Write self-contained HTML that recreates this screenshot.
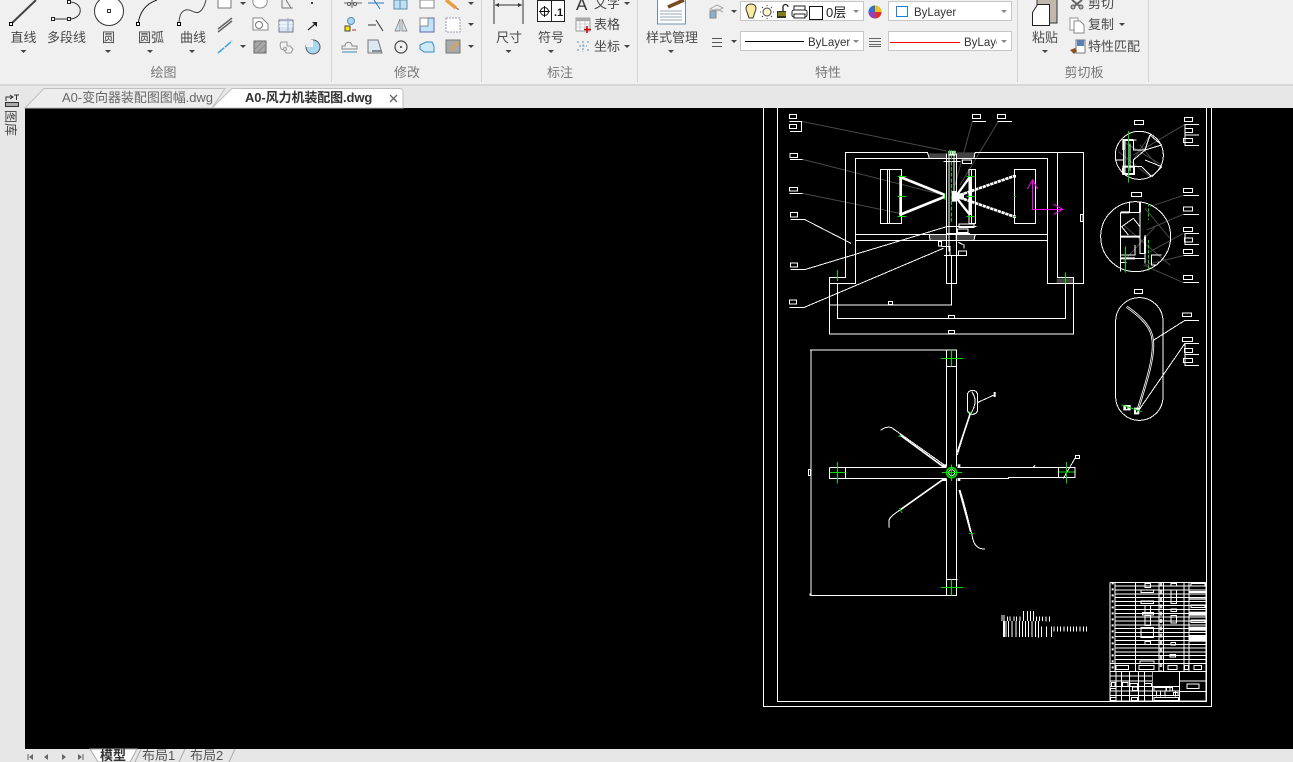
<!DOCTYPE html>
<html><head><meta charset="utf-8"><style>
html,body{margin:0;padding:0;background:#000;width:1293px;height:762px;overflow:hidden}
svg{display:block;position:absolute;left:0;top:0}
text{font-family:"Liberation Sans","Noto Sans CJK SC",sans-serif;font-size:13px;fill:#4a4a4a}
.m{text-anchor:middle}.g{fill:#777}
.d{fill:none;stroke:#fff;stroke-width:3;shape-rendering:crispEdges}
.k{fill:none;stroke:#484848;stroke-width:3}
.n{fill:none;stroke:#00e000;stroke-width:3;shape-rendering:crispEdges}
.i{fill:none;stroke:#555;stroke-width:1}
</style></head><body>
<svg width="1293" height="762" viewBox="0 0 1293 762">
<rect width="1293" height="762" fill="#000"/>
<!-- ribbon -->
<rect width="1293" height="85" fill="#f0f0f0"/>
<rect y="85" width="1293" height="23" fill="#e7e7e7"/>
<rect y="84" width="1293" height="2" fill="#d8d8d8"/>
<rect y="86" width="25" height="676" fill="#e7e7e7"/>
<rect y="749" width="1293" height="13" fill="#e7e7e7"/>
<path d="M331.500 0V82M481.500 0V82M637.500 0V82M1017.500 0V82M1148.500 0V82" stroke="#d4d4d4"/>
<!-- draw icons -->
<path d="M11 24L36 0" stroke="#444" stroke-width="2"/><rect x="9.500" y="22.500" width="3" height="3" fill="#fff" stroke="#000"/>
<path d="M53 19H69M69 2C84 2 84 19 69 19" fill="none" stroke="#333"/>
<rect x="51.500" y="17.500" width="3" height="3" fill="#fff" stroke="#222"/><rect x="67.500" y="17.500" width="3" height="3" fill="#fff" stroke="#222"/><rect x="67.500" y="0.500" width="3" height="3" fill="#fff" stroke="#222"/>
<circle cx="109" cy="11" r="14.500" fill="#fff" stroke="#333"/><rect x="107.500" y="9.500" width="3" height="3" fill="#fff" stroke="#333"/>
<path d="M138 24C140 10 148 3 157 0" fill="none" stroke="#222"/><rect x="136.500" y="22.500" width="3" height="3" fill="#fff" stroke="#000"/>
<path d="M179 24C179 10 186 8 192 11C200 16 204 8 206 0" fill="none" stroke="#444"/><rect x="177.500" y="22.500" width="3" height="3" fill="#fff" stroke="#000"/>
<path d="M218 0V8H231V0" fill="#fff" stroke="#777"/><path d="M253 0C252 5 256 8 260 8C264 8 268 5 267 0" fill="#fff" stroke="#888"/><path d="M282 8V0M282 8H293M286 0L291 8" fill="none" stroke="#777"/><rect x="311" y="2" width="2" height="2" fill="#444"/>
<path d="M218 29L232 18M218 32L232 21" stroke="#666" stroke-width="1.500"/>
<path d="M218 53L232 41" stroke="#3aa0dc" stroke-width="1.500" stroke-dasharray="8 1"/>
<path d="M253 18H262L268 24V30H253Z" fill="#fff" stroke="#888"/><circle cx="259" cy="25" r="3.500" fill="none" stroke="#777"/>
<path d="M279 20H293V32H279Z" fill="#d6e3f0" stroke="#778"/><path d="M279 23H293M279 26H293" stroke="#fff"/><path d="M288 18V33" stroke="#8fa8c0"/>
<path d="M308 30L315 24" stroke="#333" stroke-width="1.300"/><path d="M312 22H317V27Z" fill="#222"/>
<rect x="254" y="41" width="12" height="12" fill="#a8a8a8" stroke="#666"/><path d="M254 44L257 41M254 50L263 41M257 53L266 44M263 53L266 50" stroke="#8a8a8a"/>
<path d="M281 42h6v4h3l3 3-2 4h-5l-2-3-3-1-1-4z" fill="#f0f0f0" stroke="#999"/><circle cx="285" cy="49" r="1.500" fill="none" stroke="#999"/>
<circle cx="313" cy="47" r="7" fill="#a8d8f0" stroke="#555"/><path d="M306 47V40H313V47Z" fill="#f0f0f0"/>
<!-- modify icons -->
<path d="M344 3H352M352 3H362M352 0V8" stroke="#666"/><circle cx="349" cy="4" r="1.500" fill="#fff" stroke="#555"/><circle cx="355" cy="4" r="1.500" fill="#fff" stroke="#555"/>
<path d="M368 3H384M374 0L380 9" stroke="#2b75b5"/>
<rect x="394" y="0" width="13" height="9" fill="#bfe0f5" stroke="#5b8fb0"/><path d="M400 0V9" stroke="#5b8fb0"/>
<rect x="420" y="0" width="14" height="8" fill="#fff" stroke="#888"/>
<path d="M446 0L456 8" stroke="#e8a040" stroke-width="3.500"/><path d="M455 7l4 2-1 1z" fill="#a33"/>
<rect x="345" y="26" width="5" height="5" fill="#ffe000" stroke="#444"/><circle cx="351" cy="21" r="3.500" fill="#a8d8f0" stroke="#5b8fb0"/><path d="M352 30h4" stroke="#a33"/>
<path d="M368 25H376M376 20L383 31" stroke="#333"/>
<path d="M400 19L395 31H400ZM402 19L407 31H402Z" fill="#cfe4f0" stroke="#777" stroke-width=".7"/>
<rect x="420" y="18" width="14" height="14" fill="#bfe3f8" stroke="#66a"/><rect x="420" y="18" width="8" height="8" fill="#fff" stroke="#888"/>
<rect x="446" y="18" width="14" height="14" fill="#fff" stroke="#99b" stroke-dasharray="2 1"/>
<path d="M342 49H357V46H352C352 41 345 41 345 46H342Z" fill="none" stroke="#888"/><path d="M342 52H357" stroke="#3a8ac0"/>
<path d="M368 40H378L382 53H368Z" fill="#dbe8f2" stroke="#777"/><path d="M372 51H381" stroke="#333"/>
<circle cx="401" cy="47" r="6" fill="none" stroke="#444" stroke-width="1.200"/><circle cx="401" cy="47" r="1" fill="#333"/>
<path d="M420 45l6-3h6l2 4v6h-10l-4-3z" fill="#cde8f8" stroke="#3a8ac0"/>
<rect x="446" y="40" width="14" height="13" fill="#aaa" stroke="#777"/><path d="M451 50L458 42" stroke="#e8a040" stroke-width="2"/>
<!-- annotation icons -->
<path d="M494 0V24M523 0V24M495 5H522" stroke="#333"/><path d="M495 5l4-2v4zM522 5l-4-2v4z" fill="#333"/>
<rect x="537.500" y="0.500" width="27" height="21" fill="#fff" stroke="#222"/><path d="M551.500 0V22" stroke="#222"/><circle cx="544.500" cy="11.500" r="4" fill="none" stroke="#111"/><path d="M539 11.500H550M544.500 6V17" stroke="#111"/>
<text x="554" y="16" style="font-size:11px;font-weight:bold;fill:#111">.1</text>
<text x="576" y="10" style="font-size:17px;fill:#333">A</text>
<rect x="576" y="18" width="14" height="13" fill="#fff" stroke="#999"/><path d="M576 18h14v3h-14zM576 24h14M576 27h14M580 18v13M585 18v13" stroke="#aaa" fill="#aaa" stroke-width=".6"/><path d="M587 26v7M584 29.500h7" stroke="#c00" stroke-width="1.500"/>
<path d="M577 42h3M577 50h3M587 42h3M587 50h3M583 41v11M579 46h8" stroke="#5a8fb5" stroke-dasharray="2 1.500"/>
<!-- properties icons -->
<rect x="657.500" y="-2" width="28" height="26" fill="#fff" stroke="#6f8fa8"/><path d="M660 11h22M660 14h22M660 17h22M660 20h22" stroke="#9ab"/><path d="M668 7L684 0" stroke="#7a4a20" stroke-width="3.500"/>
<path d="M710 9l7-4 6 3-6 3zM710 12l7-3 6 3" fill="none" stroke="#aaa"/><rect x="710" y="11" width="6" height="7" fill="#8ab0cc" stroke="#888"/>
<rect x="740.500" y="1.500" width="123" height="19" fill="#fff" stroke="#c6c6c6"/>
<path d="M751 4C746 4 745 8 747 12L749 18H753L755 12C757 8 756 4 751 4Z" fill="#f8eaa0" stroke="#333"/>
<circle cx="767" cy="12" r="4" fill="#fff6d0" stroke="#444"/><path d="M767 6v-1M767 19v-1M761 12h-1M774 12h-1M762 7l1 1M771 16l1 1M772 7l-1 1M762 17l1-1" stroke="#444"/>
<rect x="777" y="11" width="9" height="7" fill="#332" /><path d="M778 13h8M778 15h8" stroke="#d8c020"/><path d="M783 11V7a2.500 2.500 0 0 1 5 0" fill="none" stroke="#222" stroke-width="1.300"/>
<rect x="792" y="10" width="15" height="7" rx="2" fill="#fff" stroke="#222"/><rect x="794" y="6" width="11" height="4" fill="#fff" stroke="#222"/><rect x="794" y="14" width="11" height="4" fill="#fff" stroke="#222"/>
<rect x="809.500" y="6.500" width="13" height="13" fill="#fff" stroke="#111"/>
<text x="826" y="17" style="font-size:13px;fill:#222">0层</text>
<circle cx="875" cy="12" r="6.500" fill="#5ac040"/><path d="M875 12V5.500A6.500 6.500 0 0 1 881.500 12Z" fill="#f0c020"/><path d="M875 12H881.500A6.500 6.500 0 0 1 875 18.500Z" fill="#e03030"/><path d="M875 12V18.500A6.500 6.500 0 0 1 868.500 12Z" fill="#9040c0"/><path d="M875 12H868.500A6.500 6.500 0 0 1 875 5.500Z" fill="#3070d0"/>
<rect x="888.500" y="1.500" width="123" height="19" fill="#fff" stroke="#c6c6c6"/>
<rect x="896.500" y="6.500" width="11" height="10" fill="#fff" stroke="#1a80d0"/>
<text x="914" y="16" style="font-size:11.500px;fill:#333">ByLayer</text>
<path d="M712 38.500H722M712 42.500H722M712 46.500H722" stroke="#555"/>
<rect x="740.500" y="31.500" width="123" height="19" fill="#fff" stroke="#c6c6c6"/>
<path d="M745 41.500H804" stroke="#000"/>
<text x="808" y="46" style="font-size:11.500px;fill:#333">ByLayer</text>
<path d="M869 38.500H881M869 41.500H881M869 44.500H881M869 46.500H881" stroke="#666"/>
<rect x="888.500" y="31.500" width="123" height="19" fill="#fff" stroke="#c6c6c6"/>
<path d="M890 42.500H960" stroke="#f00"/>
<svg x="964" y="34" width="33" height="16"><text x="0" y="12" style="font-size:11.500px;fill:#333">ByLayer</text></svg>
<!-- clipboard icons -->
<rect x="1037" y="-6" width="20" height="29" fill="#c0b8ac" stroke="#333"/>
<path d="M1032.500 12.500L1037.500 4.500H1049.500V25.500H1032.500Z" fill="#fff" stroke="#222"/>
<path d="M1072 0L1082 8M1082 0L1072 8" stroke="#666" stroke-width="2"/><circle cx="1073" cy="7" r="2" fill="#bbb" stroke="#555"/><circle cx="1081" cy="7" r="2" fill="#bbb" stroke="#555"/>
<path d="M1070 18h8v12h-8z" fill="#fff" stroke="#999"/><path d="M1074 21h6l4 4v8h-10z" fill="#fff" stroke="#888"/>
<rect x="1076" y="40" width="9" height="13" fill="#fff" stroke="#777"/><rect x="1077" y="40" width="7" height="6" fill="#5a80b0"/><path d="M1070 50l5-2 2 3-3 3z" fill="#8a5020"/>
<!-- caret arrows -->
<path fill="#444" d="M20.500 50h6l-3 3zM105 50h6l-3 3zM147 50h6l-3 3zM189 50h6l-3 3zM240 2h6l-3 3zM240 45h6l-3 3zM468 2h6l-3 3zM468 23h6l-3 3zM468 45h6l-3 3zM505.500 50h6l-3 3zM548 50h6l-3 3zM624 2h6l-3 3zM624 45h6l-3 3zM668 50h6l-3 3zM731 10h6l-3 3zM731 40h6l-3 3zM1042 50h6l-3 3zM1119 23h6l-3 3z"/>
<path fill="#888" d="M853 10h6l-3 3zM1001 10h6l-3 3zM853 40h6l-3 3zM1001 40h6l-3 3z"/>
<!-- ribbon text -->
<g class="rt">
<text class="m" x="23.500" y="42">直线</text><text class="m" x="66.500" y="42">多段线</text><text class="m" x="108.500" y="42">圆</text><text class="m" x="151" y="42">圆弧</text><text class="m" x="193" y="42">曲线</text>
<text class="m g" x="163.500" y="77">绘图</text><text class="m g" x="407" y="77">修改</text><text class="m g" x="560" y="77">标注</text><text class="m g" x="828" y="77">特性</text><text class="m g" x="1084" y="77">剪切板</text>
<text class="m" x="509" y="42">尺寸</text><text class="m" x="551" y="42">符号</text>
<text x="594" y="8">文字</text><text x="594" y="29">表格</text><text x="594" y="51">坐标</text>
<text class="m" x="672" y="42">样式管理</text>
<text class="m" x="1045" y="42">粘贴</text><text x="1088" y="8">剪切</text><text x="1088" y="29">复制</text><text x="1088" y="51">特性匹配</text>
</g>
<!-- tabs -->
<path d="M25 108L44 88.500H225L212 108Z" fill="#ededed" stroke="#c0c0c0"/>
<path d="M212 108L232 88.500H400Q403 88.500 403 92V108Z" fill="#fff" stroke="#c0c0c0"/>
<text x="62" y="102" style="font-size:13px;fill:#666;letter-spacing:-.05px">A0-变向器装配图图幅.dwg</text>
<text x="245" y="102" style="font-size:13px;font-weight:bold;fill:#333;letter-spacing:-.1px">A0-风力机装配图.dwg</text>
<path d="M390 95L397 102M397 95L390 102" stroke="#666" stroke-width="1.300"/>
<!-- left rail -->
<path d="M6 101V97H12M10 95l3 2-3 2M14 95h5M16.500 95v5" fill="none" stroke="#333"/><rect x="5.500" y="102.500" width="13" height="4" fill="#aaa" stroke="#333"/>
<text transform="translate(6,110) rotate(90)" style="font-size:13px;fill:#444">图库</text>
<!-- bottom bar -->
<path fill="#666" d="M33 754v6l-4-3zM48 754v6l-4-3zM62 754v6l4-3zM78 754v6l4-3z"/><path d="M28 754v6M83 754v6" stroke="#666"/>
<path d="M90 749L98 762H130L137 749Z" fill="#fff" stroke="#aaa"/><path d="M135 762L141 749M179 762L185 749M229 762L235 749" stroke="#aaa"/>
<text x="100" y="760" style="font-size:13px;font-weight:bold;fill:#333">模型</text>
<text x="142" y="760" style="font-size:13px;fill:#555">布局1</text><text x="190" y="760" style="font-size:13px;fill:#555">布局2</text>

<!-- drawing frame -->
<path d="M763.500 108V706.500H1211.500V108M777.500 108V701.500H1206.500V108" fill="none" stroke="#fff" shape-rendering="crispEdges"/>

<!-- main section -->
<g transform="translate(770,105) scale(.33333)">
<path class="k" d="M95 49L530 138M607 49L555 240M685 49L570 240M97 163L520 270M97 265L390 325"/>
<path fill="#444" d="M472 145H530V160H478ZM560 142H615L612 160H560ZM478 390H530V406H480ZM555 390H618L612 406H555Z"/>
<path fill="#444" d="M860 520H910V535H860Z"/>
<path class="d" d="M58 28h22v13h-22zM58 58h22v13h-22zM58 49H95V80H60M607 28h25v13h-25zM607 49H648M682 28h25v13h-25zM682 49H726M60 145h23v12h-23zM60 163H97M58 247h25v11h-25zM58 265H97M61 322h22v14h-22zM61 343H103L243 415M61 474h22v12h-22zM61 493H107L530 365M58 585h22v12h-22zM58 607H103L520 430"/>
<path class="d" d="M178 535V517H226V142H472M615 142H940V535H832V160H257V535H178V687H910V517H862V142M202 535V640H886V535M180 600H545V535M355 589h13v9h-13zM535 632h19v8h-19zM535 676h19v9h-19zM931 328h8v22h-8zM257 388H832M257 406H832M472 142L478 160H257M615 142L612 160M331 193H395V356H331ZM352 193V356M358 193V356M733 193H797V356H733ZM597 193H617V356H597ZM605 193V356M529 145V535H560V145M520 170H572M537 145V440M552 145V260M578 165h27v11h-27zM567 357h45v10h-45zM562 372h32v11h-32zM565 438h24v13h-24zM505 410h10v13h-10zM522 451H590M515 425H540V450M530 365H620M530 385H600M545 450V600M478 390L480 406M615 390L612 406M565 412L582 420V430"/>
<path d="M388 215L525 270M388 330L525 275M392 215V330" stroke="#fff" stroke-width="8" fill="none"/>
<path d="M570 270L733 213M570 278L733 335" stroke="#fff" stroke-width="8" stroke-dasharray="10 2" fill="none"/>
<path d="M600 215L562 268M600 330L562 282M601 215V330" stroke="#fff" stroke-width="7" fill="none"/>
<path fill="#fff" d="M545 258h14v32h-14zM558 265h24v18h-24zM730 210h8v8h-8zM730 331h8v8h-8zM535 138h22v14h-22z"/>
<path class="n" d="M382 215H408M382 274H408M382 334H408M590 215H614M590 274H614M590 334H614M202 495V528M886 502V535M525 265V285M730 274H738M730 334H738"/>
<path class="n" d="M545 135V350M538 135V150M552 135V150" stroke-dasharray="12 5"/>
<path d="M788 225V313H878M772 252L788 225L803 252M852 298L878 313L852 328" fill="none" stroke="#f0f" stroke-width="3" shape-rendering="crispEdges"/>
</g>

<!-- details -->
<g transform="translate(1090,105) scale(.33333)">
<path class="k" d="M285 58L130 150M280 271L180 305M280 328L170 375M280 385L180 440M280 452L165 480M280 533L160 480M100 110L215 180M85 140L180 215M130 165L180 90M150 120L210 190M165 310L240 400M100 360L240 480M100 470L200 360"/>
<circle class="d" cx="148" cy="151" r="72"/><circle class="d" cx="137" cy="395" r="105"/>
<rect class="d" x="77" y="578" width="142" height="368" rx="71"/>
<path class="d" d="M133 46h27v12h-27zM283 37h25v12h-25zM285 70h22v13h-22zM281 101h26v12h-26zM327 58H285V121H327M285 90H327M124 262h31v12h-31zM280 250h27v13h-27zM280 271H327M280 306h27v12h-27zM280 328H327M280 367h27v12h-27zM283 399h25v12h-25zM327 385H285V418H327M280 433h27v12h-27zM280 452H327M280 511h27v12h-27zM280 533H327M133 553h25v12h-25zM277 624h27v11h-27zM327 646H285L190 706M277 697h31v13h-31zM283 730h25v12h-25zM280 760h27v13h-27zM327 715H285V781H327M285 748H327M285 715L140 925"/>
<path class="d" d="M75 165H100V105H130V135H165L180 90M165 135L215 120M100 165V190H97V207H130V185H155L185 215M165 165L215 185M165 135L130 165M105 105V207M130 185V165M97 105H140M120 115V200M180 90L215 120M185 215L215 185"/>
<path d="M100 135V105H130M100 185H132V207H100Z" fill="none" stroke="#fff" stroke-width="6"/>
<path class="d" d="M92 322H150V290M118 290V322M92 322V500M92 395H150V365L130 340L95 365L115 390M92 450H135V420M92 460H165V445H150V320M165 390V475M185 450V480H200M92 472H110M183 450H215M150 395V320"/>
<path d="M150 290V322M92 322H118M92 395H150M165 395V445M92 460H135" fill="none" stroke="#fff" stroke-width="6"/>
<path d="M110 605C160 640 185 670 188 705C195 750 170 830 143 915" fill="none" stroke="#fff" stroke-width="7"/><path d="M110 605C160 640 185 670 188 705C195 750 170 830 143 915" fill="none" stroke="#000" stroke-width="2"/>
<path fill="#fff" d="M100 900h22v16h-22zM132 908h16v20h-16z"/><path fill="#000" d="M108 904h4v8h-4zM138 914h4v8h-4z"/>
<path class="n" d="M115 78V232M106 424V503M95 900L155 920"/>
<path class="n" d="M176 295V345M176 405V497" stroke-dasharray="10 5"/>
</g>

<!-- plan view -->
<g transform="translate(800,345) scale(.33333)">
<path class="d" d="M30 15H470V365M33 15V752H470V400M30 745V752M440 15V365M440 400V752M88 367H440M472 367H825V397H625V400H472M88 367V400H440M136 367V400M775 367V397M440 65H470M440 703H472M25 373h7v18h-7z"/>
<path class="d" d="M242 256C255 245 265 245 275 248L440 365M430 365L300 270M268 548C262 520 270 515 300 495L430 403M480 435C495 480 505 530 515 565C520 600 530 612 555 612M472 330L510 205M513 205C528 180 530 160 515 140M534 172L582 150M825 340L790 400M700 366L705 361"/>
<path d="M472 322L511 205M430 403L300 495M478 435L512 560M300 270L430 365" stroke="#fff" stroke-width="5" fill="none"/>
<rect class="d" x="502" y="136" width="31" height="72" rx="15"/>
<rect x="581" y="141" width="6" height="15" fill="#fff"/><rect class="d" x="826" y="331" width="12" height="10"/>
<rect x="427" y="358" width="12" height="8" fill="#fff"/><rect x="427" y="401" width="12" height="7" fill="#fff"/><rect x="473" y="358" width="8" height="8" fill="#fff"/><rect x="473" y="401" width="8" height="7" fill="#fff"/>
<circle cx="455" cy="383" r="15" fill="none" stroke="#00e000" stroke-width="5"/><circle cx="455" cy="383" r="9" fill="none" stroke="#fff" stroke-width="3"/>
<path class="n" d="M423 40H489M455 15V65M423 727H489M455 703V752M426 383H486M455 358V408M88 383H136M112 351V416M775 381H824M800 351V416M296 275L304 270M298 490L306 503M507 565H520M505 200L516 206"/>
</g>

<!-- title block -->
<g transform="translate(990,575) scale(.33333)">
<path class="d" d="M36 120V138M42 120V138M52 124V138M60 124V138M72 124V138M80 124V138M90 124V138M100 108V138M112 108V138M122 108V138M130 108V138M140 124V138M148 124V138M158 124V138M168 124V140M178 124V140M40 138V186M44 138V186M48 138V186M56 138V186M66 138V186M78 138V186M88 138V186M98 138V186M106 138V186M116 138V186M126 138V186M136 138V186M146 138V188M155 155V186M170 155V186M185 155V186M192 155V170M202 155V170M212 155V170M222 155V170M232 155V170M241 155V170M250 155V170M260 155V170M270 155V170M280 155V170M290 155V170"/>
<path class="d" d="M360 22H648V378M360 22V378M375 22V290M437 22V290M507 22V290M520 22V290M582 22V290M597 22V290M375 33H648M375 45H648M375 57H648M375 68H648M375 80H648M375 92H648M375 103H648M375 115H648M375 126H648M375 138H648M375 150H648M375 161H648M375 173H648M375 184H648M375 196H648M375 208H648M375 219H648M375 231H648M375 242H648M375 254H648M360 266H648M360 290H648"/>
<path class="d" d="M360 303H488M360 318H488M360 334H568M360 348H568M360 362H568M378 290V378M395 290V378M418 290V378M445 290V378M463 290V378M488 290V378M568 290V378M568 318H648M568 350H648M360 378H648M500 348V365M512 348V365M525 348V365M540 334V348M556 348V365"/>
<path class="d" d="M378 272h38v12h-38zM447 272h45v12h-45zM534 272h27v12h-27zM584 272h11v12h-11zM612 272h22v12h-22zM591 327h36v14h-36zM465 25h17v12h-17zM453 45h38v8h-38zM453 78h38v8h-38zM465 92h17v20h-17zM458 112h32v8h-32zM465 122h17v30h-17zM543 25h17v8h-17zM543 45h17v40h-17zM543 102h17v8h-17zM543 122h17v22h-17zM603 25h42v8h-42zM603 90h42v8h-42zM603 135h42v8h-42zM453 158h38v30h-38zM543 202h14v8h-14zM465 200h17v8h-17zM450 258h42v8h-42zM492 338h36v10h-36zM530 338h18v10h-18zM492 367h74v9h-74zM420 325h22v9h-22zM463 325h22v9h-22zM365 322h10v12h-10zM398 322h16v12h-16zM362 340h16v8h-16zM428 336h14v10h-14zM425 368h17v8h-17zM362 368h16v8h-16zM550 352h14v10h-14zM540 238h16v8h-16z"/>
<rect x="598" y="110" width="50" height="12" fill="#fff"/><rect x="598" y="155" width="50" height="12" fill="#fff"/><rect x="598" y="180" width="50" height="20" fill="#fff"/><rect x="598" y="48" width="50" height="6" fill="#fff"/><rect x="598" y="70" width="50" height="4" fill="#fff"/><rect x="598" y="78" width="50" height="3" fill="#fff"/>
<path d="M511 22V290M515 22V290" stroke="#fff" stroke-width="3" stroke-dasharray="12 10" fill="none"/>
<path d="M368 22V290" stroke="#fff" stroke-width="6" stroke-dasharray="6 12" fill="none"/>
<rect x="488" y="291" width="79" height="42" fill="#000"/>
</g>
</svg>
</body></html>
